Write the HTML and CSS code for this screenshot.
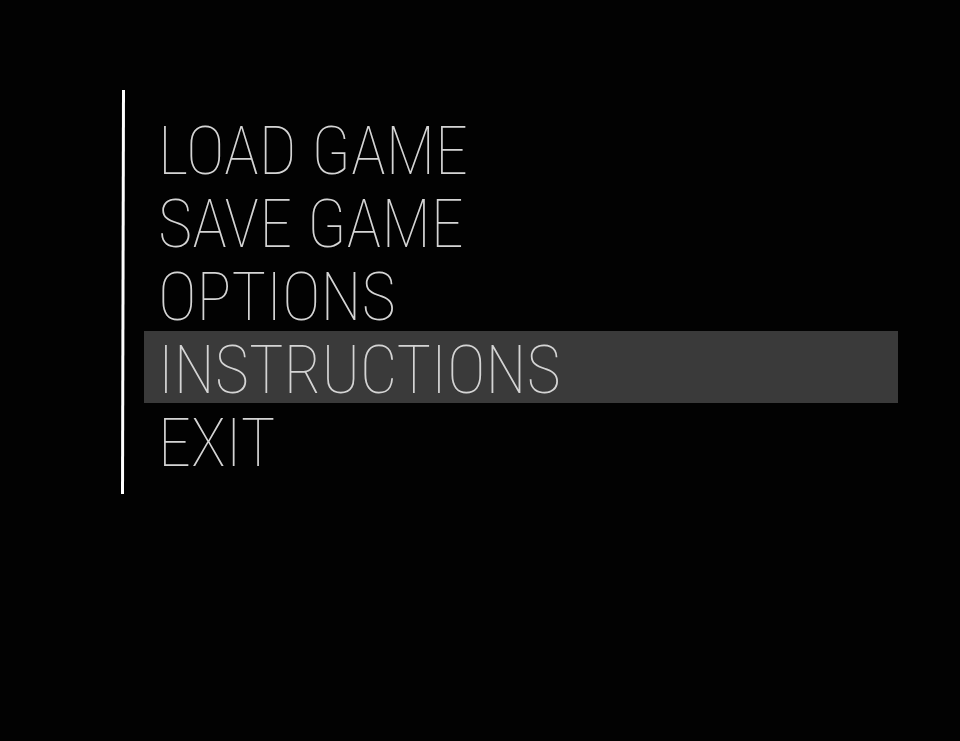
FILE: index.html
```html
<!DOCTYPE html>
<html lang="en">
<head>
<meta charset="utf-8">
<meta name="viewport" content="width=device-width, initial-scale=1">
<title>Main Menu</title>
<link rel="stylesheet" href="styles.css">
</head>
<body>
<main class="screen">
<svg class="rule" viewBox="0 0 4 404" preserveAspectRatio="none" aria-hidden="true"><path d="M1 0H4L3 404H0Z"/></svg>
<nav class="menu" aria-label="Main menu">
<button class="item" type="button">LOAD GAME</button>
<button class="item" type="button">SAVE GAME</button>
<button class="item" type="button">OPTIONS</button>
<button class="item selected" type="button">INSTRUCTIONS</button>
<button class="item" type="button">EXIT</button>
</nav>
</main>
</body>
</html>
```
FILE: styles.css
```css
body {
  margin: 0;
  background: #020202;
}

.screen {
  display: flex;
  gap: 19px;
  padding: 90px 62px 90px 121px;
}

.rule {
  flex: none;
  width: 4px;
  fill: #fff;
}

.menu {
  flex: 1;
  display: flex;
  flex-direction: column;
  gap: 1px;
  padding: 22px 0 18px;
}

.item {
  padding: 8px 14px 0;
  border: 0;
  background: transparent;
  color: #d4d4d4;
  font-family: "Roboto Condensed", Roboto, sans-serif;
  font-weight: 100;
  font-size: 66px;
  line-height: 64px;
  text-align: left;
  white-space: nowrap;
}

.selected {
  background: #3a3a3a;
}
```
